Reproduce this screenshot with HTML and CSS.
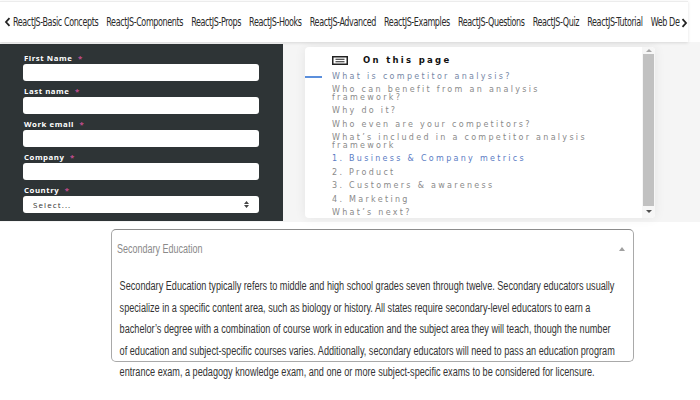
FILE: index.html
```html
<!DOCTYPE html>
<html lang="en">
<head>
<meta charset="utf-8">
<title>Collage</title>
<link rel="stylesheet" href="styles.css">
</head>
<body>
<nav class="topnav">
  <svg class="chev" width="7" height="10" viewBox="0 0 7 10"><path d="M5.5 1.2 L2 5 L5.5 8.8" fill="none" stroke="#222" stroke-width="1.8"/></svg>
  <div class="nav-track">
    <a>ReactJS-Basic Concepts</a>
    <a>ReactJS-Components</a>
    <a>ReactJS-Props</a>
    <a>ReactJS-Hooks</a>
    <a>ReactJS-Advanced</a>
    <a>ReactJS-Examples</a>
    <a>ReactJS-Questions</a>
    <a>ReactJS-Quiz</a>
    <a>ReactJS-Tutorial</a>
    <a>Web Dev</a>
  </div>
  <svg class="chev-right" width="7" height="10" viewBox="0 0 7 10"><path d="M1.5 1.2 L5 5 L1.5 8.8" fill="none" stroke="#222" stroke-width="1.8"/></svg>
</nav>

<section class="middle">
  <form class="signup">
    <div class="field"><label>First Name <span class="req">*</span></label><div class="input"></div></div>
    <div class="field"><label>Last name <span class="req">*</span></label><div class="input"></div></div>
    <div class="field"><label>Work email <span class="req">*</span></label><div class="input"></div></div>
    <div class="field"><label>Company <span class="req">*</span></label><div class="input"></div></div>
    <div class="field"><label>Country <span class="req">*</span></label>
      <div class="input select"><span>Select...</span>
        <svg width="5" height="7" viewBox="0 0 5 7"><path d="M2.5 0 L5 3 L0 3 Z M0 4 L5 4 L2.5 7 Z" fill="#444"/></svg>
      </div>
    </div>
  </form>

  <aside class="toc">
    <div class="toc-body">
      <div class="toc-head">
        <svg width="16" height="9" viewBox="0 0 16 9"><rect x="0.75" y="0.75" width="14.5" height="7.5" fill="none" stroke="#222" stroke-width="1.5"/><path d="M3.5 3.3 H12.5 M3.5 5.7 H12.5" stroke="#222" stroke-width="1.1"/></svg>
        <span>On this page</span>
      </div>
      <ul class="toc-list">
        <li class="active">What is competitor analysis?</li>
        <li>Who can benefit from an analysis<br>framework?</li>
        <li>Why do it?</li>
        <li>Who even are your competitors?</li>
        <li>What’s included in a competitor analysis<br>framework</li>
        <li class="link">1. Business &amp; Company metrics</li>
        <li>2. Product</li>
        <li>3. Customers &amp; awareness</li>
        <li>4. Marketing</li>
        <li>What’s next?</li>
      </ul>
    </div>
    <div class="scrollbar">
      <span class="arrow up"></span>
      <span class="thumb"></span>
      <span class="arrow down"></span>
    </div>
  </aside>
</section>

<section class="lower">
  <div class="accordion">
    <div class="acc-head"><span class="acc-title">Secondary Education</span><span class="caret"></span></div>
    <p class="acc-body">Secondary Education typically refers to middle and high school grades seven through twelve. Secondary educators usually<br>specialize in a specific content area, such as biology or history. All states require secondary-level educators to earn a<br>bachelor’s degree with a combination of course work in education and the subject area they will teach, though the number<br>of education and subject-specific courses varies. Additionally, secondary educators will need to pass an education program<br>entrance exam, a pedagogy knowledge exam, and one or more subject-specific exams to be considered for licensure.</p>
  </div>
</section>
</body>
</html>
```

FILE: styles.css
```css
html, body {
  margin: 0;
  padding: 0;
}

body {
  width: 700px;
  height: 400px;
  overflow: hidden;
  background: #ffffff;
}

/* ---------- top navigation ---------- */
.topnav {
  position: relative;
  box-sizing: border-box;
  width: 688px;
  height: 41px;
  margin-top: 1px;
  display: flex;
  align-items: center;
  padding-left: 4px;
  background: #fff;
  border-top: 1px solid #ececec;
  box-shadow: 0 1px 3px rgba(0, 0, 0, 0.12);
  overflow: hidden;
}

.chev {
  flex: none;
  margin-right: 2px;
}

.nav-track {
  flex: none;
  display: flex;
  gap: 10.5px;
  transform: scaleX(0.775);
  transform-origin: 0 50%;
  font-family: "DejaVu Sans Condensed", "Liberation Sans", sans-serif;
  font-size: 11.5px;
  letter-spacing: -0.5px;
  color: #2a2a2a;
  white-space: nowrap;
}

.chev-right {
  position: absolute;
  right: 0;
  top: 16px;
  padding-left: 1px;
  background: #fff;
}

/* ---------- middle band ---------- */
.middle {
  display: flex;
  height: 180px;
  background: #f5f5f5;
}

.signup {
  box-sizing: border-box;
  width: 283px;
  height: 177px;
  margin: 2px 0 0;
  padding: 9px 24px 0 23px;
  background: #2e3436;
}

.field label {
  display: block;
  padding-left: 1px;
  margin-bottom: 1px;
  font-family: "Open Sans", sans-serif;
  font-weight: 700;
  font-size: 7.8px;
  line-height: 10px;
  letter-spacing: 0.55px;
  color: #ffffff;
}

.req {
  color: #c24d8e;
  margin-left: 3px;
}

.input {
  height: 17px;
  margin-bottom: 5px;
  background: #ffffff;
  border-radius: 3px;
}

.select {
  display: flex;
  align-items: center;
  justify-content: space-between;
  padding: 0 10px;
  font-family: "Open Sans", sans-serif;
  font-size: 8px;
  letter-spacing: 1.1px;
  color: #333;
}

/* ---------- table of contents card ---------- */
.toc {
  width: 350px;
  height: 171px;
  margin: 5px 0 0 22px;
  display: flex;
  background: #ffffff;
  border-radius: 4px;
  box-shadow: 0 0 12px rgba(0, 0, 0, 0.07);
  overflow: hidden;
}

.toc-body {
  flex: 1;
  padding: 8px 0 0 27px;
  white-space: nowrap;
}

.toc-head {
  display: flex;
  align-items: center;
  gap: 15px;
  height: 10px;
  font-family: "DejaVu Sans", sans-serif;
  font-weight: 700;
  font-size: 8.5px;
  letter-spacing: 2.3px;
  color: #111;
}

.toc-list {
  list-style: none;
  margin: 7.5px 0 0;
  padding: 0;
  font-family: "DejaVu Sans", sans-serif;
  font-size: 8px;
  line-height: 7.5px;
  letter-spacing: 2.3px;
  color: #8a8a8a;
}

.toc-list li {
  position: relative;
  margin-bottom: 6px;
}

.toc-list li.active {
  color: #7688a6;
}

.toc-list li.active::before {
  content: "";
  position: absolute;
  left: -27px;
  top: 3px;
  width: 17px;
  height: 2px;
  background: #5b8fdc;
}

.toc-list li.link {
  color: #5b7cc4;
}

.scrollbar {
  width: 13px;
  display: flex;
  flex-direction: column;
  align-items: center;
  background: #f6f6f6;
}

.scrollbar .arrow {
  width: 0;
  height: 0;
  border-left: 3px solid transparent;
  border-right: 3px solid transparent;
}

.scrollbar .up {
  margin: 2px 0 2px;
  border-bottom: 3px solid #a8a8a8;
}

.scrollbar .thumb {
  width: 11px;
  flex: 1;
  background: #c1c1c1;
}

.scrollbar .down {
  margin: 4px 0 5px;
  border-top: 3px solid #505050;
}

/* ---------- accordion ---------- */
.lower {
  padding: 7px 0 0 111px;
}

.accordion {
  box-sizing: border-box;
  width: 523px;
  height: 133px;
  border: 1px solid #a9a9a9;
  border-top-color: #8c8c8c;
  border-radius: 5px;
}

.acc-head {
  display: flex;
  align-items: center;
  justify-content: space-between;
  height: 38px;
  padding: 0 8px 0 5px;
}

.acc-title {
  display: inline-block;
  transform: scaleX(0.75);
  transform-origin: 0 50%;
  font-family: "Liberation Sans", sans-serif;
  font-size: 12px;
  color: #8a8a8a;
  white-space: nowrap;
}

.caret {
  width: 0;
  height: 0;
  border-left: 3px solid transparent;
  border-right: 3px solid transparent;
  border-bottom: 4px solid #a0a0a0;
}

.acc-body {
  width: 660px;
  margin: 0;
  padding: 8px 0 0 10px;
  transform: scaleX(0.76);
  transform-origin: 0 0;
  font-family: "Liberation Sans", sans-serif;
  font-size: 12px;
  line-height: 21.5px;
  color: #333;
  white-space: nowrap;
}
```
